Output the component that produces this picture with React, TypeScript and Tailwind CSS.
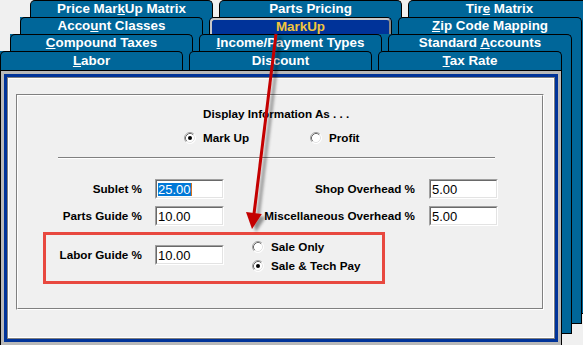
import type { ReactNode } from "react"

function Tab({ children, className = "" }: { children: ReactNode; className?: string }) {
  return (
    <div
      className={`flex shrink-0 items-center justify-center rounded-t-[5px] border border-b-0 border-black bg-[#006699] text-[13.4px] font-bold leading-none text-white ${className}`}
    >
      <span>{children}</span>
    </div>
  )
}

function ActiveTab({ children }: { children: ReactNode }) {
  return (
    <div className="w-[183px] shrink-0 rounded-t-[5px] border border-b-0 border-black bg-[#003399]">
      <div className="flex h-full items-center justify-center rounded-t-[4px] border-l-2 border-r-2 border-t-2 border-l-[#c8c8c8] border-r-[#8a8a8a] border-t-[#c8c8c8] text-[13.4px] font-bold leading-none text-[#f2c53d]">
        {children}
      </div>
    </div>
  )
}

function Gap() {
  return <div className="w-[6px] shrink-0" />
}

function RadioDot({ checked }: { checked?: boolean }) {
  return (
    <svg width="12" height="12" viewBox="0 0 12 12" className="shrink-0">
      <circle cx="6" cy="6" r="5.5" fill="#fff" />
      <path d="M2.11 9.89 A5.5 5.5 0 0 1 9.89 2.11" stroke="#a0a0a0" fill="none" />
      <path d="M2.82 9.18 A4.5 4.5 0 0 1 9.18 2.82" stroke="#696969" fill="none" />
      <path d="M9.89 2.11 A5.5 5.5 0 0 1 2.11 9.89" stroke="#ffffff" fill="none" />
      <path d="M9.18 2.82 A4.5 4.5 0 0 1 2.82 9.18" stroke="#e3e3e3" fill="none" />
      {checked && <circle cx="6" cy="6" r="2" fill="#000" />}
    </svg>
  )
}

function Radio({ label, checked, className = "" }: { label: string; checked?: boolean; className?: string }) {
  return (
    <div className={`flex h-[19px] items-center gap-[7px] ${className}`}>
      <RadioDot checked={checked} />
      <span>{label}</span>
    </div>
  )
}

function Field({ value, selected }: { value: string; selected?: boolean }) {
  return (
    <div className="flex h-[20px] w-[69px] shrink-0 border border-b-white border-l-[#a0a0a0] border-r-white border-t-[#a0a0a0]">
      <div className="flex flex-1 items-center border border-b-[#e3e3e3] border-l-[#696969] border-r-[#e3e3e3] border-t-[#696969] bg-white pl-px text-[13px] font-normal leading-none text-black">
        {selected ? (
          <>
            <span className="inline-block h-[13px] bg-[#0078d7] leading-[13px] text-white">{value}</span>
            <span className="inline-block h-[13px] w-px bg-[#d07020]" />
          </>
        ) : (
          <span>{value}</span>
        )}
      </div>
    </div>
  )
}

function Strip({ className }: { className: string }) {
  return <div className={`shrink-0 border-b border-r border-black bg-[#006699] ${className}`} />
}

export default function App() {
  return (
    <div className="relative h-[345px] w-[583px] overflow-hidden bg-[#f0f0f0] font-['Liberation_Sans',Arial,sans-serif] text-black">
      {/* back row */}
      <div className="flex h-[17px] pl-[30px]">
        <Tab className="w-[183px]">
          Price Mar<u>k</u>Up Matrix
        </Tab>
        <Gap />
        <Tab className="w-[183px]">
          Parts Pricin<u>g</u>
        </Tab>
        <Gap />
        <Tab className="w-[183px]">
          Tir<u>e</u> Matrix
        </Tab>
      </div>

      <div className="flex">
        <div className="flex w-[582px] shrink-0 flex-col">
          <div className="flex h-[17px]">
            <div className="w-[20px] shrink-0" />
            <div className="flex flex-1 bg-[#006699]">
              <Tab className="w-[183px]">
                Acco<u>u</u>nt Classes
              </Tab>
              <div className="w-[6px] shrink-0" />
              <ActiveTab>MarkUp</ActiveTab>
              <div className="w-[6px] shrink-0" />
              <Tab className="flex-1">
                <u>Z</u>ip Code Mapping
              </Tab>
            </div>
          </div>

          <div className="flex">
            <div className="flex w-[572px] shrink-0 flex-col">
              <div className="flex h-[17px]">
                <div className="w-[10px] shrink-0" />
                <div className="flex flex-1 bg-[#006699]">
                  <Tab className="w-[183px]">
                    <u>C</u>ompound Taxes
                  </Tab>
                  <div className="w-[6px] shrink-0" />
                  <Tab className="w-[183px]">
                    <u>I</u>ncome/Payment Types
                  </Tab>
                  <div className="w-[6px] shrink-0" />
                  <Tab className="flex-1">
                    Standard <u>A</u>ccounts
                  </Tab>
                </div>
              </div>

              <div className="flex">
                <div className="flex w-[562px] shrink-0 flex-col">
                  <div className="flex h-[19px] bg-[#006699]">
                    <Tab className="w-[183px]">
                      <u>L</u>abor
                    </Tab>
                    <div className="w-[6px] shrink-0" />
                    <Tab className="w-[183px]">Discount</Tab>
                    <div className="w-[6px] shrink-0" />
                    <Tab className="flex-1">
                      <u>T</u>ax Rate
                    </Tab>
                  </div>

                  {/* page body */}
                  <div className="h-[275px] border border-b-0 border-black bg-[#b9b9b9] p-[3px]">
                    <div className="h-full bg-[#003399] p-[3px]">
                      <div className="h-full border border-[#808080]">
                        <div className="h-full border border-white bg-[#f0f0f0] pl-[7px] pt-[15px]">
                          <div className="h-[216px] w-[528px] border border-b-white border-l-[#808080] border-r-white border-t-[#808080]">
                            <div className="h-full border border-b-[#808080] border-l-white border-r-[#808080] border-t-white">
                              <div className="flex flex-col pt-[11px] text-[11.7px] font-bold leading-[14px]">
                                <div className="h-[14px] pl-[185px]">Display Information As . . .</div>
                                <div className="mt-[7px] flex pl-[166px]">
                                  <Radio checked label="Mark Up" className="w-[126px]" />
                                  <Radio label="Profit" />
                                </div>
                                <div className="ml-[40px] mt-[10px] h-[2px] w-[437px] border-b border-t border-b-white border-t-[#808080]" />

                                <div className="mt-[20px] flex h-[20px] items-center">
                                  <div className="w-[124px] shrink-0 text-right">Sublet %</div>
                                  <div className="ml-[13px]">
                                    <Field value="25.00" selected />
                                  </div>
                                  <div className="w-[191px] shrink-0 text-right">Shop Overhead %</div>
                                  <div className="ml-[14px]">
                                    <Field value="5.00" />
                                  </div>
                                </div>

                                <div className="mt-[7px] flex h-[20px] items-center">
                                  <div className="w-[124px] shrink-0 text-right">Parts Guide %</div>
                                  <div className="ml-[13px]">
                                    <Field value="10.00" />
                                  </div>
                                  <div className="w-[191px] shrink-0 text-right">Miscellaneous Overhead %</div>
                                  <div className="ml-[14px]">
                                    <Field value="5.00" />
                                  </div>
                                </div>

                                <div className="ml-[25px] mt-[6px] flex h-[52px] w-[342px] border-[3px] border-[#e8483f]">
                                  <div className="mt-[10px] flex h-[20px] items-center">
                                    <div className="w-[96px] shrink-0 text-right">Labor Guide %</div>
                                    <div className="ml-[13px]">
                                      <Field value="10.00" />
                                    </div>
                                  </div>
                                  <div className="ml-[28px] flex flex-col pt-[2px]">
                                    <Radio label="Sale Only" />
                                    <Radio checked label="Sale & Tech Pay" />
                                  </div>
                                </div>
                              </div>
                            </div>
                          </div>
                        </div>
                      </div>
                    </div>
                  </div>
                </div>
                <Strip className="h-[283px] w-[10px]" />
              </div>
            </div>
            <Strip className="h-[290px] w-[10px]" />
          </div>
        </div>
        <div className="h-[297px] w-px shrink-0 border-b border-black bg-[#006699]" />
      </div>

      {/* callout arrow */}
      <svg className="pointer-events-none absolute left-0 top-0" width="583" height="345" viewBox="0 0 583 345">
        <defs>
          <filter id="arrowShadow" filterUnits="userSpaceOnUse" x="0" y="0" width="583" height="345">
            <feDropShadow dx="4" dy="3" stdDeviation="1.6" floodColor="#000" floodOpacity="0.4" />
          </filter>
        </defs>
        <g filter="url(#arrowShadow)">
          <line x1="276" y1="34" x2="254" y2="214" stroke="#c40000" strokeWidth="3" />
          <polygon points="252,229 246,212 261.8,214.1" fill="#c40000" />
        </g>
      </svg>
    </div>
  )
}
